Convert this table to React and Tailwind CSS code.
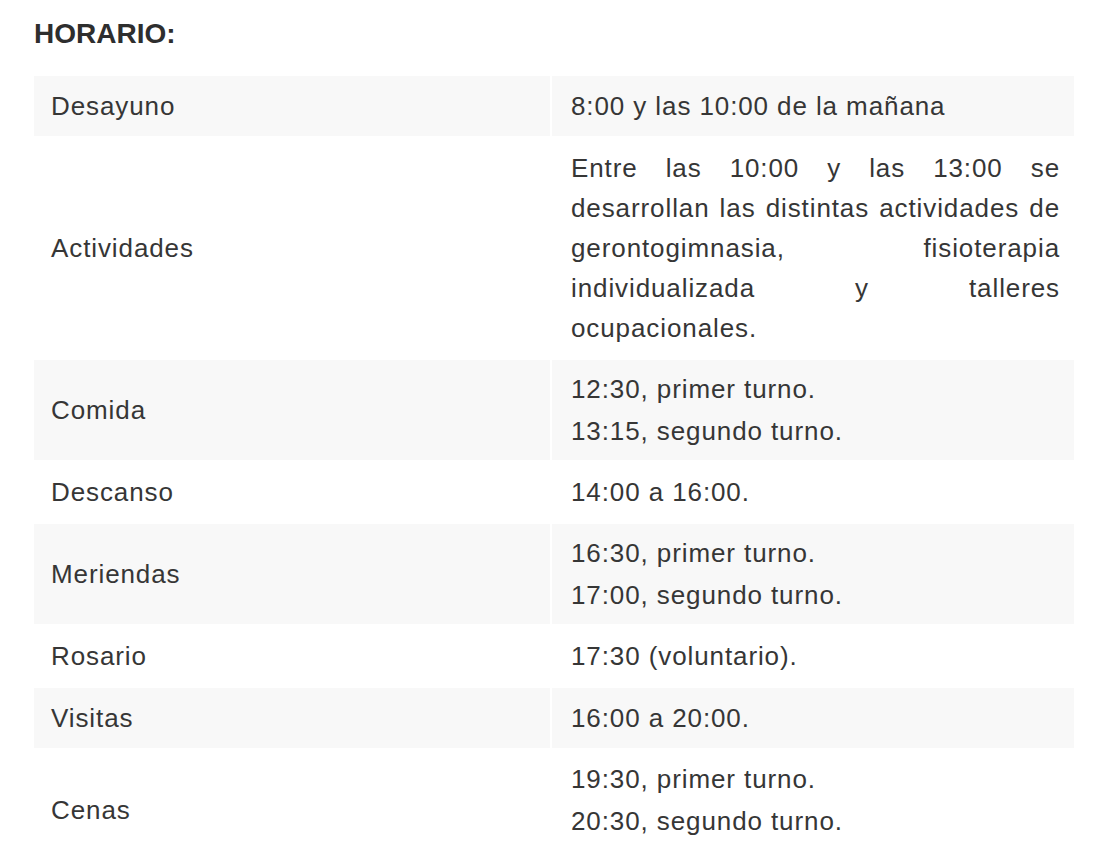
const rows = [
  ['Desayuno', ['8:00 y las 10:00 de la mañana']],
  [
    'Actividades',
    ['Entre las 10:00 y las 13:00 se desarrollan las distintas actividades de gerontogimnasia, fisioterapia individualizada y talleres ocupacionales.'],
  ],
  ['Comida', ['12:30, primer turno.', '13:15, segundo turno.']],
  ['Descanso', ['14:00 a 16:00.']],
  ['Meriendas', ['16:30, primer turno.', '17:00, segundo turno.']],
  ['Rosario', ['17:30 (voluntario).']],
  ['Visitas', ['16:00 a 20:00.']],
  ['Cenas', ['19:30, primer turno.', '20:30, segundo turno.'], true],
];

export default function App() {
  return (
    <div className="min-h-[864px] bg-white pl-[32px] pt-[18px] text-[#363636] [font-family:'Liberation_Sans',Arial,sans-serif]">
      <h2 className="pl-[2px] text-[28px] font-bold leading-[32px] text-[#2e2e2e]">HORARIO:</h2>
      <table className="mt-[24px] w-[1044px] table-fixed border-separate border-spacing-[2px] text-[26px] leading-[40px] tracking-[0.9px]">
        <tbody>
          {rows.map(([label, lines, last], i) => {
            const multi = lines.length > 1;
            return (
              <tr key={label} className={i % 2 === 0 ? 'bg-[#f8f8f8]' : 'bg-white'}>
                <td className="w-[516px] py-[10px] pl-[17px] pr-[16px] align-middle">{label}</td>
                <td
                  className={`pl-[19px] pr-[14px] text-justify align-top ${
                    multi ? 'pt-[8px] leading-[42px]' : 'py-[10px]'
                  } ${multi && last ? 'pb-[28px]' : multi ? 'pb-[8px]' : ''}`}
                >
                  {lines.map((line) => (
                    <div key={line}>{line}</div>
                  ))}
                </td>
              </tr>
            );
          })}
        </tbody>
      </table>
    </div>
  );
}
